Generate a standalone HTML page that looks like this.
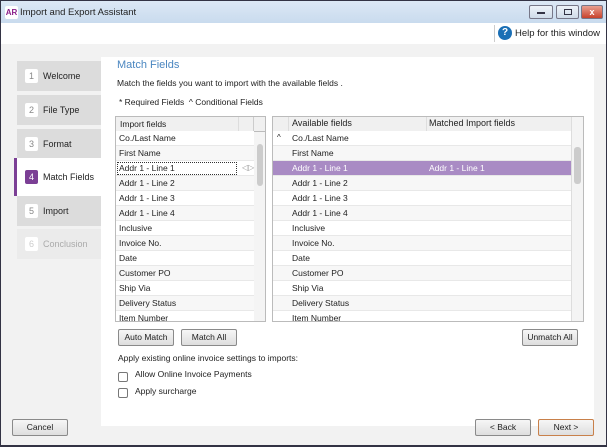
<!DOCTYPE html>
<html><head><style>
*{box-sizing:border-box;margin:0;padding:0}
body{width:607px;height:447px;overflow:hidden;font-family:"Liberation Sans",sans-serif;font-size:9px;color:#222;background:#f2f2f2;position:relative}
.a{position:absolute}
.title{left:0;top:0;width:607px;height:23px;background:linear-gradient(#dce8f5,#c9dbee);border:1px solid #334;border-bottom:none}
.tb{top:5px;height:14px;border:1px solid #778;border-radius:2px;background:linear-gradient(#eef3f9,#cfdbe8)}
.help{left:1px;top:23px;width:605px;height:21px;background:#fff}
.side{left:17px;width:84px;height:30px;background:#dcdcdc;font-size:9px;line-height:30px;padding-left:26px}
.side span{position:absolute;left:8px;top:8px;width:13px;height:14px;background:#fff;line-height:14px;text-align:center;color:#888;border-radius:2px}
.panel{left:101px;top:57px;width:493px;height:369px;background:#fff}
.grid{border:1px solid #bbb;background:#fff;overflow:hidden}
.row{position:absolute;left:0;height:15px;line-height:15px;border-bottom:1px solid #e8e8e8;font-size:8.5px}
.btn{height:17px;border:1px solid #8a8a8a;border-radius:2px;background:linear-gradient(#f6f6f6,#dedede);font-size:8.5px;text-align:center;line-height:15px}
.cb{width:10px;height:10px;border:1px solid #777;border-radius:2px;background:#fff}
</style></head><body>
<div class="a title"></div>
<div class="a" style="left:5px;top:6px;width:13px;height:13px;background:#fff;border-radius:2px;color:#8a1e8a;font-weight:bold;font-size:8px;line-height:13px;text-align:center">AR</div>
<div class="a" style="left:20px;top:7px;font-size:9.5px">Import and Export Assistant</div>
<div class="a tb" style="left:529px;width:24px"><div class="a" style="left:7px;top:6px;width:8px;height:2px;background:#334"></div></div>
<div class="a tb" style="left:556px;width:23px"><div class="a" style="left:7px;top:3px;width:8px;height:6px;border:1px solid #334"></div></div>
<div class="a tb" style="left:581px;width:22px;background:linear-gradient(#e8a090,#c8422c);color:#fff;text-align:center;font-size:9px;line-height:12px;font-weight:bold">x</div>
<div class="a help"></div>
<div class="a" style="left:494px;top:25px;width:1px;height:17px;background:#ccc"></div>
<div class="a" style="left:498px;top:26px;width:14px;height:14px;border-radius:50%;background:#1a6fb5;color:#fff;font-weight:bold;text-align:center;line-height:14px;font-size:10px">?</div>
<div class="a" style="left:515px;top:28px;font-size:9.5px">Help for this window</div>
<div class="a" style="left:0;top:23px;width:1px;height:424px;background:#334"></div>
<div class="a" style="right:0;top:23px;width:1px;height:424px;background:#334"></div>
<div class="a" style="left:0;bottom:0;width:607px;height:2px;background:#334"></div>

<div class="a side" style="top:61px"><span>1</span>Welcome</div>
<div class="a side" style="top:95px"><span>2</span>File Type</div>
<div class="a side" style="top:129px"><span>3</span>Format</div>
<div class="a side" style="top:158px;left:14px;width:87px;height:38px;background:#fff;line-height:38px;padding-left:26px;border-left:3px solid #7b3f95"><span style="left:8px;top:12px;background:#7b3f95;color:#fff">4</span>Match Fields</div>
<div class="a side" style="top:196px"><span>5</span>Import</div>
<div class="a side" style="top:229px;background:#ebebeb;color:#aaa"><span style="color:#ccc">6</span>Conclusion</div>

<div class="a panel"></div>
<div class="a" style="left:117px;top:59px;font-size:11px;color:#4a86c0">Match Fields</div>
<div class="a" style="left:117px;top:78px;font-size:8.5px">Match the fields you want to import with the available fields .</div>
<div class="a" style="left:119px;top:97px;font-size:8.5px">* Required Fields &nbsp;^ Conditional Fields</div>

<div class="a grid" style="left:115px;top:116px;width:151px;height:206px">
<div class="row" style="top:0;width:150px;background:#f0f0f0;border-bottom:1px solid #bbb;padding-left:4px">Import fields</div>
<div class="a" style="left:122px;top:0;width:1px;height:206px;background:#ddd"></div>
<div class="a" style="left:137px;top:0;width:1px;height:206px;background:#ccc"></div>
<div id="lrows"></div>
<div class="a" style="left:138px;top:15px;width:12px;height:191px;background:#f4f4f4"></div>
<div class="a" style="left:141px;top:27px;width:6px;height:42px;background:#ccc;border-radius:3px"></div>
<div class="a" style="left:126px;top:46px;font-size:8px;color:#999">◁▷</div>
</div>

<div class="a grid" style="left:272px;top:116px;width:312px;height:206px">
<div class="row" style="top:0;width:311px;background:#f0f0f0;border-bottom:1px solid #bbb"></div>
<div class="a" style="left:19px;top:1px">Available fields</div>
<div class="a" style="left:156px;top:1px">Matched Import fields</div>
<div class="a" style="left:15px;top:0;width:1px;height:206px;background:#ddd"></div>
<div class="a" style="left:153px;top:0;width:1px;height:206px;background:#ddd"></div>
<div id="rrows"></div>
<div class="a" style="left:298px;top:0;width:13px;height:206px;background:#f4f4f4;border-left:1px solid #ddd"></div>
<div class="a" style="left:301px;top:30px;width:7px;height:37px;background:#ccc;border-radius:3px"></div>
<div class="a" style="left:4px;top:16px;font-size:8px">^</div>
</div>

<div class="a btn" style="left:118px;top:329px;width:56px">Auto Match</div>
<div class="a btn" style="left:181px;top:329px;width:56px">Match All</div>
<div class="a btn" style="left:522px;top:329px;width:56px">Unmatch All</div>
<div class="a" style="left:118px;top:353px;font-size:8.5px">Apply existing online invoice settings to imports:</div>
<div class="a cb" style="left:118px;top:372px"></div>
<div class="a" style="left:135px;top:369px;font-size:8.5px">Allow Online Invoice Payments</div>
<div class="a cb" style="left:118px;top:388px"></div>
<div class="a" style="left:135px;top:386px;font-size:8.5px">Apply surcharge</div>

<div class="a btn" style="left:12px;top:419px;width:56px">Cancel</div>
<div class="a btn" style="left:475px;top:419px;width:56px">&lt; Back</div>
<div class="a btn" style="left:538px;top:419px;width:56px;border-color:#c8804a">Next &gt;</div>
<script>
var n=["Co./Last Name","First Name","Addr 1 - Line 1","Addr 1 - Line 2","Addr 1 - Line 3","Addr 1 - Line 4","Inclusive","Invoice No.","Date","Customer PO","Ship Via","Delivery Status","Item Number"];
var l="",r="";
n.forEach(function(t,i){var top=14+i*15,bg=i%2?"#f7f7f7":"#fff";
l+='<div class="row" style="top:'+top+'px;width:138px;background:'+bg+';padding-left:3px">'+(i==2?'<div style="position:absolute;left:1px;top:1px;width:120px;height:13px;border:1px dotted #333"></div>':'')+t+'</div>';
var sel=i==2;
r+='<div class="row" style="top:'+top+'px;width:298px;background:'+(sel?'#a98bc4':bg)+';color:'+(sel?'#fff':'#222')+'"><span style="position:absolute;left:19px">'+t+'</span>'+(sel?'<span style="position:absolute;left:156px">Addr 1 - Line 1</span>':'')+'</div>';});
document.getElementById("lrows").outerHTML=l;document.getElementById("rrows").outerHTML=r;
</script>
</body></html>
